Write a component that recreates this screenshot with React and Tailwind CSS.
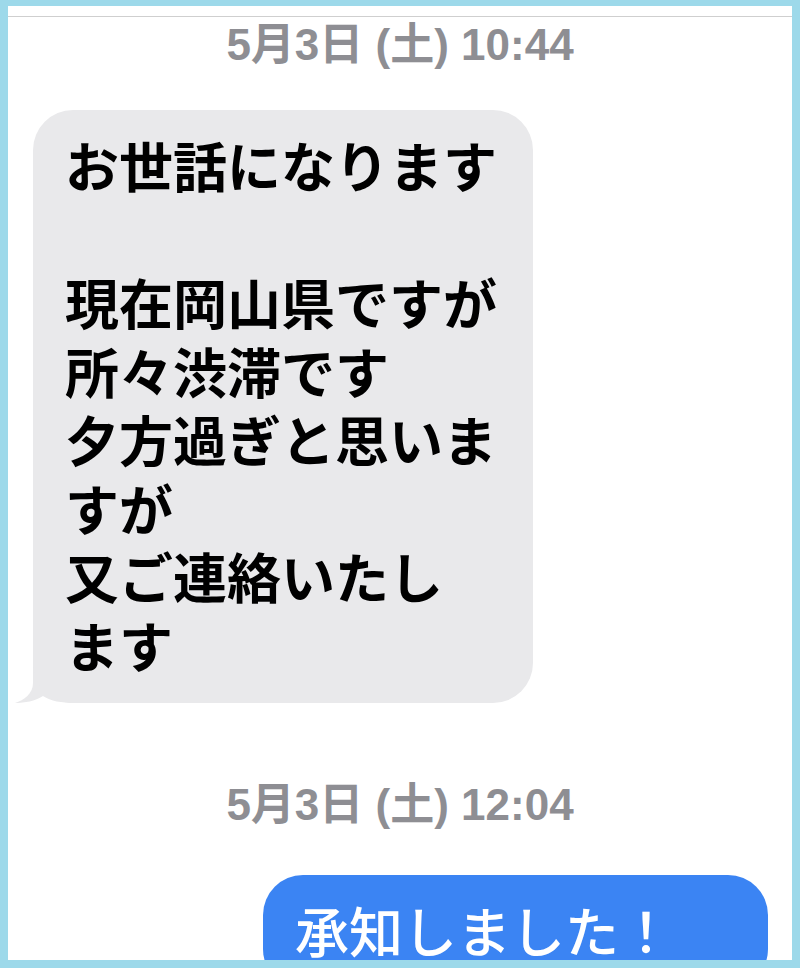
import React from "react";

const Stamp = ({ children }) => (
  <div className="h-[56px] flex items-center justify-center text-[44px] font-bold text-[#8e8e93] font-['Liberation_Sans','Noto_Sans_CJK_JP',sans-serif]">
    {children}
  </div>
);

const App = () => {
  const lines = [
    "お世話になります",
    "\u00a0",
    "現在岡山県ですが",
    "所々渋滞です",
    "夕方過ぎと思いま",
    "すが",
    "又ご連絡いたし",
    "ます",
  ];

  return (
    <div className="w-[800px] h-[968px] bg-[#9dd9ea] pt-[6px] pl-[8px] pr-[8px] pb-[8px] font-['Noto_Sans_CJK_JP',sans-serif]">
      <div className="w-full h-full bg-white overflow-hidden flex flex-col">
        <div className="pt-[10px]">
          <div className="border-t border-[#cfcfcf]" />
        </div>

        <Stamp>5月3日 (土) 10:44</Stamp>

        {/* incoming */}
        <div className="mt-[37px] ml-[25px] relative w-[500px]">
          <svg
            className="absolute left-[-18px] bottom-0"
            width="60"
            height="40"
            viewBox="0 0 60 40"
          >
            <path
              d="M18 0 L18 20 C18 31 9 37 0 40 C10 40 20 38 28 33 C36 38 46 40 60 40 L60 0 Z"
              fill="#e9e9eb"
            />
          </svg>
          <div className="relative bg-[#e9e9eb] rounded-[40px] pt-[21px] pb-[24px] px-8 text-[54px] leading-[68.5px] font-bold text-black">
            {lines.map((l, i) => (
              <div key={i} className="whitespace-nowrap">
                {l}
              </div>
            ))}
          </div>
        </div>

        <div className="mt-[74px]">
          <Stamp>5月3日 (土) 12:04</Stamp>
        </div>

        {/* outgoing */}
        <div className="mt-[42px] mr-[24px] self-end w-[505px] bg-[#3b84f3] rounded-[40px] pt-[21px] pb-[24px] px-8 text-[54px] leading-[68.5px] font-medium text-white">
          承知しました！
        </div>
      </div>
    </div>
  );
};

export default App;
